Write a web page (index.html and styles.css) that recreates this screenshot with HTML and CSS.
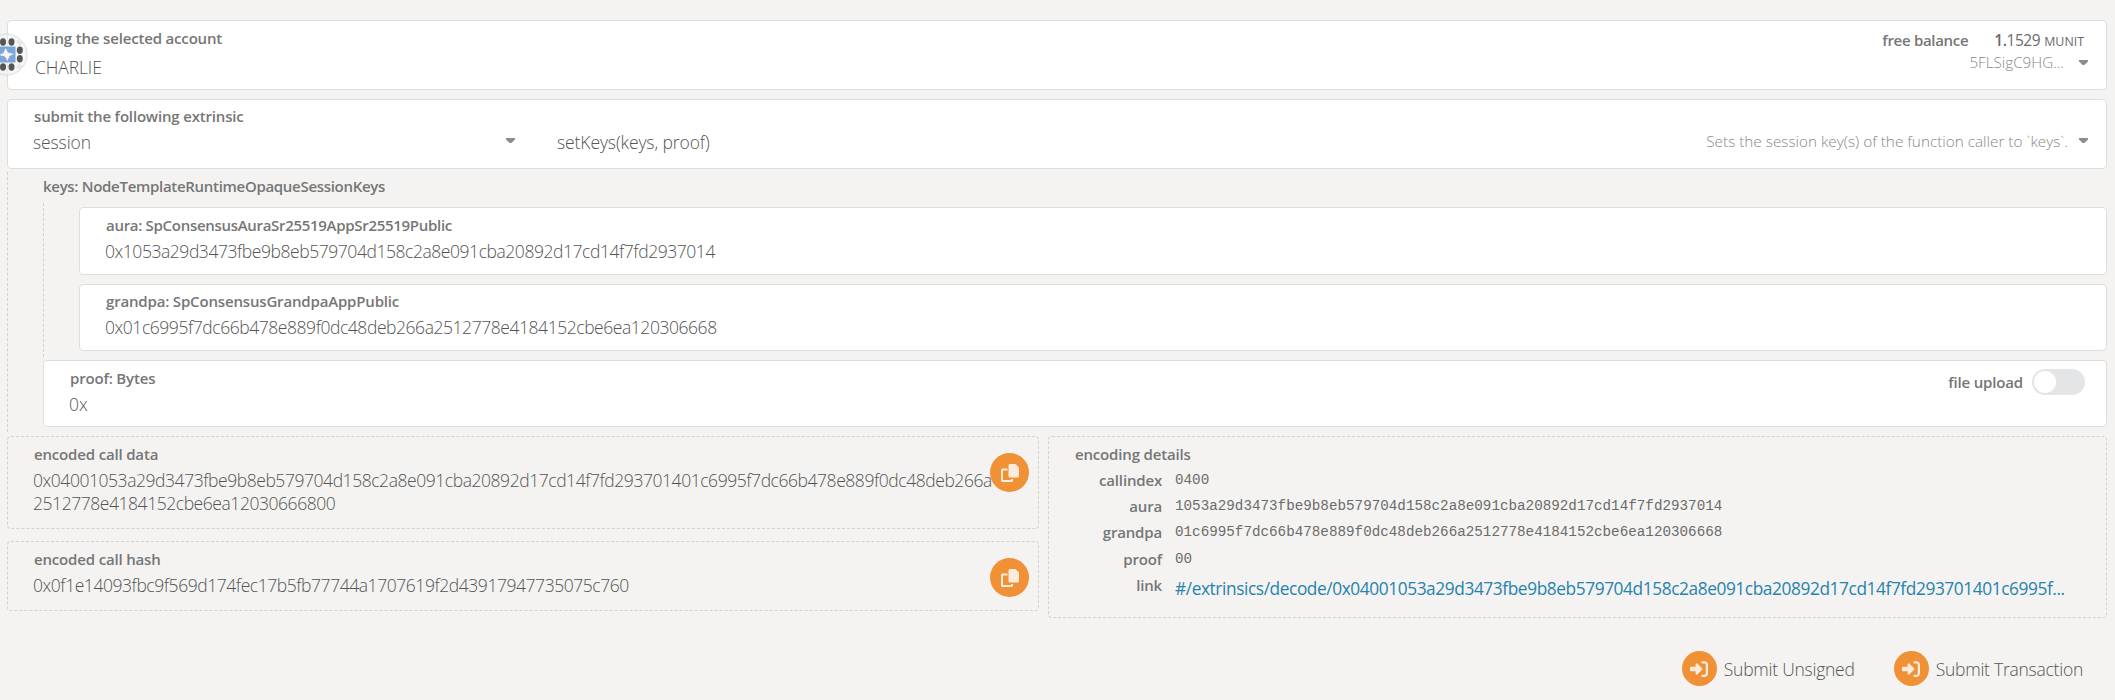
FILE: index.html
```html
<!DOCTYPE html>
<html lang="en">
<head>
<meta charset="utf-8">
<title>Extrinsics</title>
<link rel="stylesheet" href="styles.css">
</head>
<body>
<svg class="defs" width="0" height="0">
  <symbol id="copy" viewBox="0 0 18 18"><path class="line" d="M6.500 5.500H1.600a.6.6 0 0 0-.6.6V16.400a.6.6 0 0 0 .6.6H10.400a.6.6 0 0 0 .6-.6V15"/><path class="fill" d="M9 0h5.500L18 3.500V12a1.500 1.500 0 0 1-1.500 1.500H9A1.500 1.500 0 0 1 7.500 12V1.500A1.500 1.500 0 0 1 9 0z"/></symbol>
  <symbol id="sign" viewBox="0 0 512 512"><path class="fill" d="M352 96h64c17.700 0 32 14.300 32 32v256c0 17.700-14.300 32-32 32h-64c-17.700 0-32 14.300-32 32s14.300 32 32 32h64c53 0 96-43 96-96V128c0-53-43-96-96-96h-64c-17.700 0-32 14.300-32 32s14.300 32 32 32zM342.600 233.400l-128-128A32 32 0 0 0 160 128v64H32c-17.700 0-32 14.300-32 32v64c0 17.700 14.300 32 32 32h128v64a32 32 0 0 0 54.600 22.600l128-128c12.500-12.500 12.500-32.700 0-45.200z"/></symbol>
</svg>
<main class="page">
  <section class="card account">
    <svg class="identicon" width="43" height="43" viewBox="0 0 43 43">
      <circle class="ring" cx="21.500" cy="21.500" r="20.500"/>
      <rect class="blue" x="13.500" y="13.500" width="17" height="16"/>
      <path class="star" d="M20.500 15l2.500 4.500 6 1.500-4.500 2-2 5-2.500-4.500-6-1.500 4.500-2z"/>
      <g class="dots"><ellipse cx="18" cy="9" rx="3" ry="3.700"/><ellipse cx="26.500" cy="9" rx="3" ry="3.700"/><ellipse cx="34.800" cy="17.300" rx="3" ry="3.700"/><ellipse cx="34.800" cy="25.700" rx="3" ry="3.700"/><ellipse cx="18" cy="34" rx="3" ry="3.700"/><ellipse cx="26.500" cy="34" rx="3" ry="3.700"/></g>
      <path class="pale" d="M34.800 5l3.500 4-3.500 4-3.500-4zM34.800 30l3.500 4-3.500 4-3.500-4z"/>
    </svg>
    <div class="who"><div class="label">using the selected account</div><div class="value name">CHARLIE</div></div>
    <div class="balance">
      <div class="row"><span class="label free">free balance</span><span class="amount"><b>1.</b>1529</span><span class="unit">MUNIT</span></div>
      <div class="row"><span class="hint address">5FLSigC9HG...</span><i class="caret"></i></div>
    </div>
  </section>
  <section class="card extrinsic">
    <div class="label">submit the following extrinsic</div>
    <div class="pick">
      <div class="value session">session</div><i class="caret"></i>
      <div class="value method">setKeys(keys, proof)</div>
      <span class="hint doc">Sets the session key(s) of the function caller to `keys`.</span><i class="caret"></i>
    </div>
  </section>
  <section class="params">
    <div class="label typed keys">keys: NodeTemplateRuntimeOpaqueSessionKeys</div>
    <div class="nested">
      <div class="card param aura"><div class="label typed">aura: SpConsensusAuraSr25519AppSr25519Public</div><div class="value hex">0x1053a29d3473fbe9b8eb579704d158c2a8e091cba20892d17cd14f7fd2937014</div></div>
      <div class="card param"><div class="label">grandpa: SpConsensusGrandpaAppPublic</div><div class="value hex">0x01c6995f7dc66b478e889f0dc48deb266a2512778e4184152cbe6ea120306668</div></div>
    </div>
    <div class="card param proof">
      <div><div class="label">proof: Bytes</div><div class="value">0x</div></div>
      <div class="upload"><span class="label">file upload</span><span class="toggle"></span></div>
    </div>
  </section>
  <section class="output">
    <div class="encoded">
      <div class="dashed data"><div class="label">encoded call data</div><div class="value hex">0x04001053a29d3473fbe9b8eb579704d158c2a8e091cba20892d17cd14f7fd293701401c6995f7dc66b478e889f0dc48deb266a<br>2512778e4184152cbe6ea12030666800</div><button class="round copy"><svg width="18" height="18"><use href="#copy"/></svg></button></div>
      <div class="dashed hash"><div class="label">encoded call hash</div><div class="value hex">0x0f1e14093fbc9f569d174fec17b5fb77744a1707619f2d43917947735075c760</div><button class="round copy"><svg width="18" height="18"><use href="#copy"/></svg></button></div>
    </div>
    <div class="dashed details">
      <div class="label">encoding details</div>
      <div class="table">
        <span class="label">callindex</span><span class="mono">0400</span>
        <span class="label">aura</span><span class="mono">1053a29d3473fbe9b8eb579704d158c2a8e091cba20892d17cd14f7fd2937014</span>
        <span class="label">grandpa</span><span class="mono">01c6995f7dc66b478e889f0dc48deb266a2512778e4184152cbe6ea120306668</span>
        <span class="label">proof</span><span class="mono">00</span>
        <span class="label">link</span><a class="value link">#/extrinsics/decode/0x04001053a29d3473fbe9b8eb579704d158c2a8e091cba20892d17cd14f7fd293701401c6995f...</a>
      </div>
    </div>
  </section>
  <footer class="actions">
    <div class="action"><span class="round"><svg width="18" height="18"><use href="#sign"/></svg></span><span class="value">Submit Unsigned</span></div>
    <div class="action"><span class="round"><svg width="18" height="18"><use href="#sign"/></svg></span><span class="value">Submit Transaction</span></div>
  </footer>
</main>
</body>
</html>
```
FILE: styles.css
```css
* { box-sizing: border-box; }
body { margin: 0; background: #f4f3f1; color: #6b6b6b; font-family: "Open Sans", "Noto Sans", sans-serif; overflow: hidden; }
.defs { position: absolute; }
.page { width: 2115px; height: 700px; padding: 20px 8px 0 7px; }
.card { background: #fff; border: 1px solid #dededd; border-radius: 4px; }
.dashed { border: 1px dashed #d2d1cf; border-radius: 4px; }
.label { font-size: 15px; font-weight: 600; line-height: 20px; letter-spacing: -.17px; color: #767676; white-space: nowrap; }
.typed { letter-spacing: -.3px; }
.value { font-size: 17.500px; font-weight: 350; line-height: 24px; letter-spacing: -.1px; color: #545454; white-space: nowrap; }
.hex { letter-spacing: -.445px; }
.hint { font-size: 15.300px; font-weight: 300; line-height: 20px; color: #888; }
.caret { width: 9px; height: 5px; background: #8c8c8c; clip-path: polygon(0 0, 100% 0, 100% 30%, 60% 100%, 40% 100%, 0 30%); }

.account { position: relative; height: 70px; display: flex; justify-content: space-between; padding: 7px 18px 0 26px; }
.identicon { position: absolute; left: -23px; top: 12px; }
.ring { fill: #f2f2f2; fill-opacity: .6; stroke: #dcdcdc; }
.blue { fill: #7ba6d9; }
.star { fill: #f4f3f1; }
.dots { fill: #555; }
.pale { fill: #e8e8e8; }
.name { margin: 7px 0 0 1px; }
.balance .row { display: flex; justify-content: flex-end; align-items: baseline; height: 22px; }
.balance { padding-top: 1px; }
.free { margin-right: 26px; letter-spacing: -.3px; }
.amount { font-size: 15.500px; font-weight: 400; letter-spacing: -.45px; }
.amount b { font-weight: 600; }
.unit { font-size: 12.400px; margin: 0 4px 0 4px; }
.address { font-size: 15.200px; }
.balance .caret { margin: 8px 0 0 15px; align-self: flex-start; }
.balance .row + .row { margin-top: 1px; }

.extrinsic { height: 70px; margin-top: 9px; padding: 6px 18px 0 26px; }
.pick { display: grid; grid-template-columns: 472px 51px 1fr auto 9px; padding-top: 4px; }
.session { margin-left: -1px; }
.pick .caret { margin-top: 8px; width: 9px; }
.doc { margin-right: 11px; padding-top: 1px; }

.params { margin-top: 3px; height: 260px; border-left: 1px dashed #d2d1cf; padding: 4px 0 0 35px; }
.nested { margin-top: 7px; height: 154px; padding: 4px 0 0 35px; border-left: 1px dashed #d2d1cf; }
.param { height: 67px; padding: 6px 20px 0 26px; }
.aura { height: 68px; padding-top: 7px; }
.param .value { margin: 4px 0 0 -1px; }
.param + .param { margin-top: 9px; }
.proof { margin-top: 3px; padding-top: 7px; display: flex; justify-content: space-between; }
.upload { display: flex; gap: 9px; padding: 1px 1px 0 0; align-items: flex-start; }
.upload .label { padding-top: 3px; }
.toggle { width: 53px; height: 26px; border-radius: 13px; background: #e3e5e7; padding: 2px; }
.toggle::before { content: ""; display: block; width: 22px; height: 22px; border-radius: 50%; background: #fff; }

.output { margin-top: 4px; display: grid; grid-template-columns: 1032px 1fr; gap: 9px; align-items: start; }
.encoded { display: grid; gap: 12px; }
.encoded .dashed { position: relative; padding: 7px 0 0 26px; }
.data { height: 93px; }
.hash { height: 70px; }
.encoded .value { line-height: 23px; margin: 5px 0 0 -1px; }
.round { display: grid; place-items: center; width: 35px; height: 35px; border: 0; padding: 0; border-radius: 50%; background: #f19135; }
.copy { position: absolute; right: 9px; top: 16px; width: 39px; height: 39px; }
.fill { fill: #fdebdc; }
.line { fill: none; stroke: #fdebdc; stroke-width: 2; }
.details { height: 182px; padding: 7px 0 0 26px; }
.table { display: grid; grid-template-columns: 87px 1fr; column-gap: 13px; grid-auto-rows: 26.400px; margin-top: 5.500px; }
.table .label { text-align: right; }
.mono { font-family: "Liberation Mono", monospace; font-size: 14.250px; line-height: 20px; }
.link { color: #2683ae; font-weight: 400; font-size: 17.300px; letter-spacing: -.41px; line-height: 24px; padding-top: 2px; }

.actions { display: flex; justify-content: flex-end; gap: 39px; margin: 33px 24px 0 0; }
.action { display: flex; align-items: center; gap: 7px; }
.action .value { letter-spacing: -.25px; }
```
